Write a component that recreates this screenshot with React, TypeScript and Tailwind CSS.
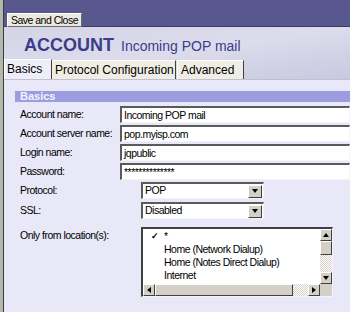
import React from 'react';

const font = { fontFamily: '"Liberation Sans", Arial, sans-serif' };
const small = 'text-[10.5px] tracking-[-0.5px]';

const Field: React.FC<{ label: string; value: string }> = ({ label, value }) => (
  <div className="flex items-center h-[17px]">
    <div className={`w-[126px] pl-[5px] ${small} text-black whitespace-nowrap`}>{label}</div>
    <div className={`w-[230px] shrink-0 h-[17px] bg-white border-t-2 border-l-2 border-t-[#5a5a5a] border-l-[#5a5a5a] border-b border-r border-b-[#f4f4f4] border-r-[#f4f4f4] pl-[2px] ${small} leading-[14px] text-black`}>
      {value}
    </div>
  </div>
);

const ArrowBtn: React.FC<{ dir: 'up' | 'down' | 'left' | 'right' }> = ({ dir }) => {
  const tri = {
    up: 'border-l-[3px] border-r-[3px] border-b-[4px] border-l-transparent border-r-transparent border-b-black',
    down: 'border-l-[3px] border-r-[3px] border-t-[4px] border-l-transparent border-r-transparent border-t-black',
    left: 'border-t-[3px] border-b-[3px] border-r-[4px] border-t-transparent border-b-transparent border-r-black',
    right: 'border-t-[3px] border-b-[3px] border-l-[4px] border-t-transparent border-b-transparent border-l-black',
  }[dir];
  return (
    <div className="w-[12px] h-[12px] shrink-0 bg-[#d4d0c8] border border-t-white border-l-white border-b-[#404040] border-r-[#404040] flex items-center justify-center">
      <div className={`w-0 h-0 ${tri}`} />
    </div>
  );
};

const Select: React.FC<{ label: string; value: string }> = ({ label, value }) => (
  <div className="flex items-center h-[17px]">
    <div className={`w-[126px] pl-[5px] ${small} text-black whitespace-nowrap`}>{label}</div>
    <div className="w-[123px] shrink-0 h-[17px] bg-white border-t-2 border-l-2 border-t-[#5a5a5a] border-l-[#5a5a5a] border-b border-r border-b-[#f4f4f4] border-r-[#f4f4f4] flex items-center">
      <span className={`flex-1 pl-[2px] ${small} text-black`}>{value}</span>
      <div className="w-[14px] h-[13px] bg-[#d4d0c8] border border-t-white border-l-white border-b-[#404040] border-r-[#404040] flex items-center justify-center mr-[1px]">
        <div className="w-0 h-0 border-l-[3px] border-r-[3px] border-t-[4px] border-l-transparent border-r-transparent border-t-black" />
      </div>
    </div>
  </div>
);

const dotted = {
  backgroundImage: 'repeating-conic-gradient(#d4d0c8 0% 25%, #ffffff 0% 50%)',
  backgroundSize: '2px 2px',
};

export default function App() {
  return (
    <div className="flex w-[350px] h-[312px] overflow-hidden bg-[#e8e8f8]" style={font}>
      <div className="w-[4px] shrink-0 bg-[#b4b8ac] border-r border-[#3c3c3c]" />
      <div className="flex-1 flex flex-col min-w-0">
        <div className="h-[27px] shrink-0 bg-[#58588f] border-b border-[#3a3a66] pl-[3px] pt-[7px]">
          <button className={`h-[14px] w-[75px] bg-[#ece9e0] border border-t-white border-l-white border-b-[#6a6a6a] border-r-[#6a6a6a] ${small} leading-[12px] text-black whitespace-nowrap`}>
            Save and Close
          </button>
        </div>
        <div className="h-[52px] shrink-0 bg-gradient-to-br from-[#d4d4e6] via-[#dcdcec] to-[#c8c8e0] flex flex-col">
          <div className="h-[32px] flex items-end pl-[20px] pb-[4px] gap-[7px] text-[#3c3c8a]">
            <span className="text-[18px] font-bold leading-[20px]">ACCOUNT</span>
            <span className="text-[14px] leading-[18px]">Incoming POP mail</span>
          </div>
          <div className="flex items-end h-[20px] text-[12px] text-black">
            <div className="h-[20px] w-[48px] bg-[#eeeef8] border-t border-l border-white border-r border-r-[#404040] pl-[2px] leading-[18px]">Basics</div>
            <div className="h-[19px] w-[124px] bg-[#efede4] border-t border-white border-r border-r-[#404040] pl-[3px] leading-[18px]">Protocol Configuration</div>
            <div className="h-[19px] w-[67px] ml-[1px] bg-[#efede4] border-t border-l border-white border-r border-r-[#404040] pl-[3px] leading-[18px]">Advanced</div>
          </div>
        </div>
        <div className="flex-1 bg-[#e8e8f8] border-t border-[#c0c0d4] pl-[11px] pt-[11px]">
          <div className="h-[11px] bg-[#9c9ce0] pl-[5px] text-[11px] leading-[11px] font-bold text-[#f4f4ff]">Basics</div>
          <div className="flex flex-col gap-[2px] mt-[4px]">
            <Field label="Account name:" value="Incoming POP mail" />
            <Field label="Account server name:" value="pop.myisp.com" />
            <Field label="Login name:" value="jqpublic" />
            <Field label="Password:" value="**************" />
            <Select label="Protocol:" value="POP" />
            <div className="mt-[1px]">
              <Select label="SSL:" value="Disabled" />
            </div>
          </div>
          <div className="flex mt-[8px]">
            <div className={`w-[126px] pl-[5px] ${small} text-black pt-[1px] whitespace-nowrap`}>Only from location(s):</div>
            <div className="w-[192px] h-[70px] shrink-0 border-t-2 border-l-2 border-t-[#404040] border-l-[#404040] border-b border-r border-b-[#f4f4f4] border-r-[#f4f4f4] bg-white flex flex-col">
              <div className="flex flex-1 min-h-0">
                <div className={`flex-1 ${small} leading-[13px] text-black pt-[1px]`}>
                  <div className="flex"><span className="w-[21px] pl-[8px] text-[9px] font-bold">✓</span><span>*</span></div>
                  <div className="pl-[21px]">Home (Network Dialup)</div>
                  <div className="pl-[21px]">Home (Notes Direct Dialup)</div>
                  <div className="pl-[21px]">Internet</div>
                </div>
                <div className="w-[12px] flex flex-col">
                  <ArrowBtn dir="up" />
                  <div className="h-[14px] bg-[#d4d0c8] border border-t-white border-l-white border-b-[#404040] border-r-[#404040]" />
                  <div className="flex-1" style={dotted} />
                  <ArrowBtn dir="down" />
                </div>
              </div>
              <div className="h-[12px] flex">
                <ArrowBtn dir="left" />
                <div className="w-[138px] bg-[#d4d0c8] border border-t-white border-l-white border-b-[#404040] border-r-[#404040]" />
                <div className="flex-1" style={dotted} />
                <ArrowBtn dir="right" />
                <div className="w-[12px] bg-[#d4d0c8]" />
              </div>
            </div>
          </div>
        </div>
      </div>
    </div>
  );
}
